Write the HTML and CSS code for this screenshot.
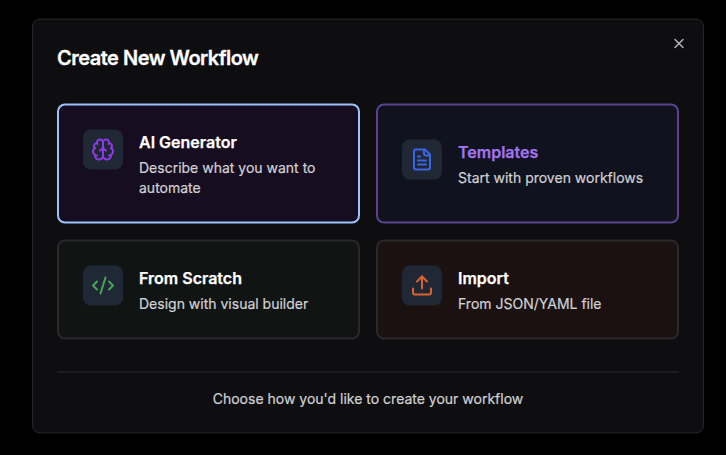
FILE: index.html
```html
<!DOCTYPE html>
<html lang="en">
<head>
<meta charset="utf-8">
<title>Create New Workflow</title>
<link rel="stylesheet" href="styles.css">
</head>
<body>
<main class="dialog" role="dialog" aria-labelledby="dialog-title">
  <button class="close" aria-label="Close">
    <svg viewBox="0 0 24 24"><path d="M18 6 6 18"/><path d="m6 6 12 12"/></svg>
  </button>
  <h1 class="title" id="dialog-title">Create New Workflow</h1>
  <div class="options">
    <button class="card card-ai">
      <span class="tile"><svg viewBox="0 0 24 24"><path d="M12 5a3 3 0 1 0-5.997.125 4 4 0 0 0-2.526 5.77 4 4 0 0 0 .556 6.588A4 4 0 1 0 12 18Z"/><path d="M12 5a3 3 0 1 1 5.997.125 4 4 0 0 1 2.526 5.77 4 4 0 0 1-.556 6.588A4 4 0 1 1 12 18Z"/><path d="M15 13a4.5 4.5 0 0 1-3-4 4.5 4.5 0 0 1-3 4"/><path d="M17.599 6.5a3 3 0 0 0 .399-1.375"/><path d="M6.003 5.125A3 3 0 0 0 6.401 6.5"/><path d="M3.477 10.896a4 4 0 0 1 .585-.396"/><path d="M19.938 10.5a4 4 0 0 1 .585.396"/><path d="M6 18a4 4 0 0 1-1.967-.516"/><path d="M19.967 17.484A4 4 0 0 1 18 18"/></svg></span>
      <span class="copy"><span class="name">AI Generator</span><span class="desc">Describe what you want to automate</span></span>
    </button>
    <button class="card card-templates">
      <span class="tile"><svg viewBox="0 0 24 24"><path d="M15 2H6a2 2 0 0 0-2 2v16a2 2 0 0 0 2 2h12a2 2 0 0 0 2-2V7Z"/><path d="M14 2v4a2 2 0 0 0 2 2h4"/><path d="M10 9H8"/><path d="M16 13H8"/><path d="M16 17H8"/></svg></span>
      <span class="copy"><span class="name">Templates</span><span class="desc">Start with proven workflows</span></span>
    </button>
    <button class="card card-scratch">
      <span class="tile"><svg viewBox="0 0 24 24"><path d="m18 16 4-4-4-4"/><path d="m6 8-4 4 4 4"/><path d="m14.5 4-5 16"/></svg></span>
      <span class="copy"><span class="name">From Scratch</span><span class="desc">Design with visual builder</span></span>
    </button>
    <button class="card card-import">
      <span class="tile"><svg viewBox="0 0 24 24"><path d="M21 15v4a2 2 0 0 1-2 2H5a2 2 0 0 1-2-2v-4"/><path d="m17 8-5-5-5 5"/><path d="M12 3v12"/></svg></span>
      <span class="copy"><span class="name">Import</span><span class="desc">From JSON/YAML file</span></span>
    </button>
  </div>
  <p class="footer">Choose how you'd like to create your workflow</p>
</main>
</body>
</html>
```
FILE: styles.css
```css
* { box-sizing: border-box; }

body {
  margin: 0;
  height: 455px;
  padding: 18px 0 0 32px;
  overflow: hidden;
  background: #000;
  font-family: Inter, "Liberation Sans", sans-serif;
  -webkit-font-smoothing: antialiased;
}

.dialog {
  position: relative;
  width: 672px;
  padding: 24px;
  border: 1px solid #27272a;
  border-radius: 8px;
  background: #0e0e10;
  color: #fff;
  transform: translateY(0.5px);
}

.close {
  position: absolute;
  top: 16px;
  right: 16px;
  display: flex;
  padding: 0;
  border: 0;
  background: none;
  color: #b9b9bb;
}

.close svg { width: 16px; height: 16px; }

svg {
  width: 24px;
  height: 24px;
  fill: none;
  stroke: currentColor;
  stroke-width: 2;
  stroke-linecap: round;
  stroke-linejoin: round;
}

.title {
  margin: 0;
  font-size: 20px;
  font-weight: 600;
  line-height: 28px;
  letter-spacing: -0.5px;
  -webkit-text-stroke: 0.3px;
}

.options {
  display: grid;
  grid-template-columns: 1fr 1fr;
  gap: 16px;
  margin: 32px 0;
}

.card {
  display: flex;
  align-items: center;
  padding: 24px;
  border: 2px solid #29292b;
  border-radius: 8px;
  color: #fff;
  font: inherit;
  text-align: left;
}

.tile {
  display: flex;
  flex: none;
  align-self: flex-start;
  padding: 8px;
  margin-right: 16px;
  border-radius: 8px;
  background: #202836;
}

.card-templates .tile { margin-top: 10px; }

.copy { display: flex; flex-direction: column; gap: 4px; }

.name {
  font-size: 16px;
  font-weight: 600;
  line-height: 24px;
  -webkit-text-stroke: 0.25px;
}

.desc {
  font-size: 14px;
  line-height: 20px;
  color: #d1d1d4;
  -webkit-text-stroke: 0.2px;
}

.card-ai { border-color: #9bc4fb; background: #170d20; }
.card-ai .tile { color: #8b3be4; }

.card-templates { border-color: #5b4391; background: #10121e; }
.card-templates .tile { color: #3866e6; }
.card-templates .name { color: #a274f2; }

.card-scratch { background: #101514; }
.card-scratch .tile { color: #48a456; }

.card-import { background: #1a1110; }
.card-import .tile { color: #dd632c; }

.footer {
  margin: 0;
  padding-top: 16px;
  border-top: 1px solid #29292b;
  font-size: 14px;
  line-height: 20px;
  text-align: center;
  color: #d1d1d4;
  -webkit-text-stroke: 0.2px;
}
```
